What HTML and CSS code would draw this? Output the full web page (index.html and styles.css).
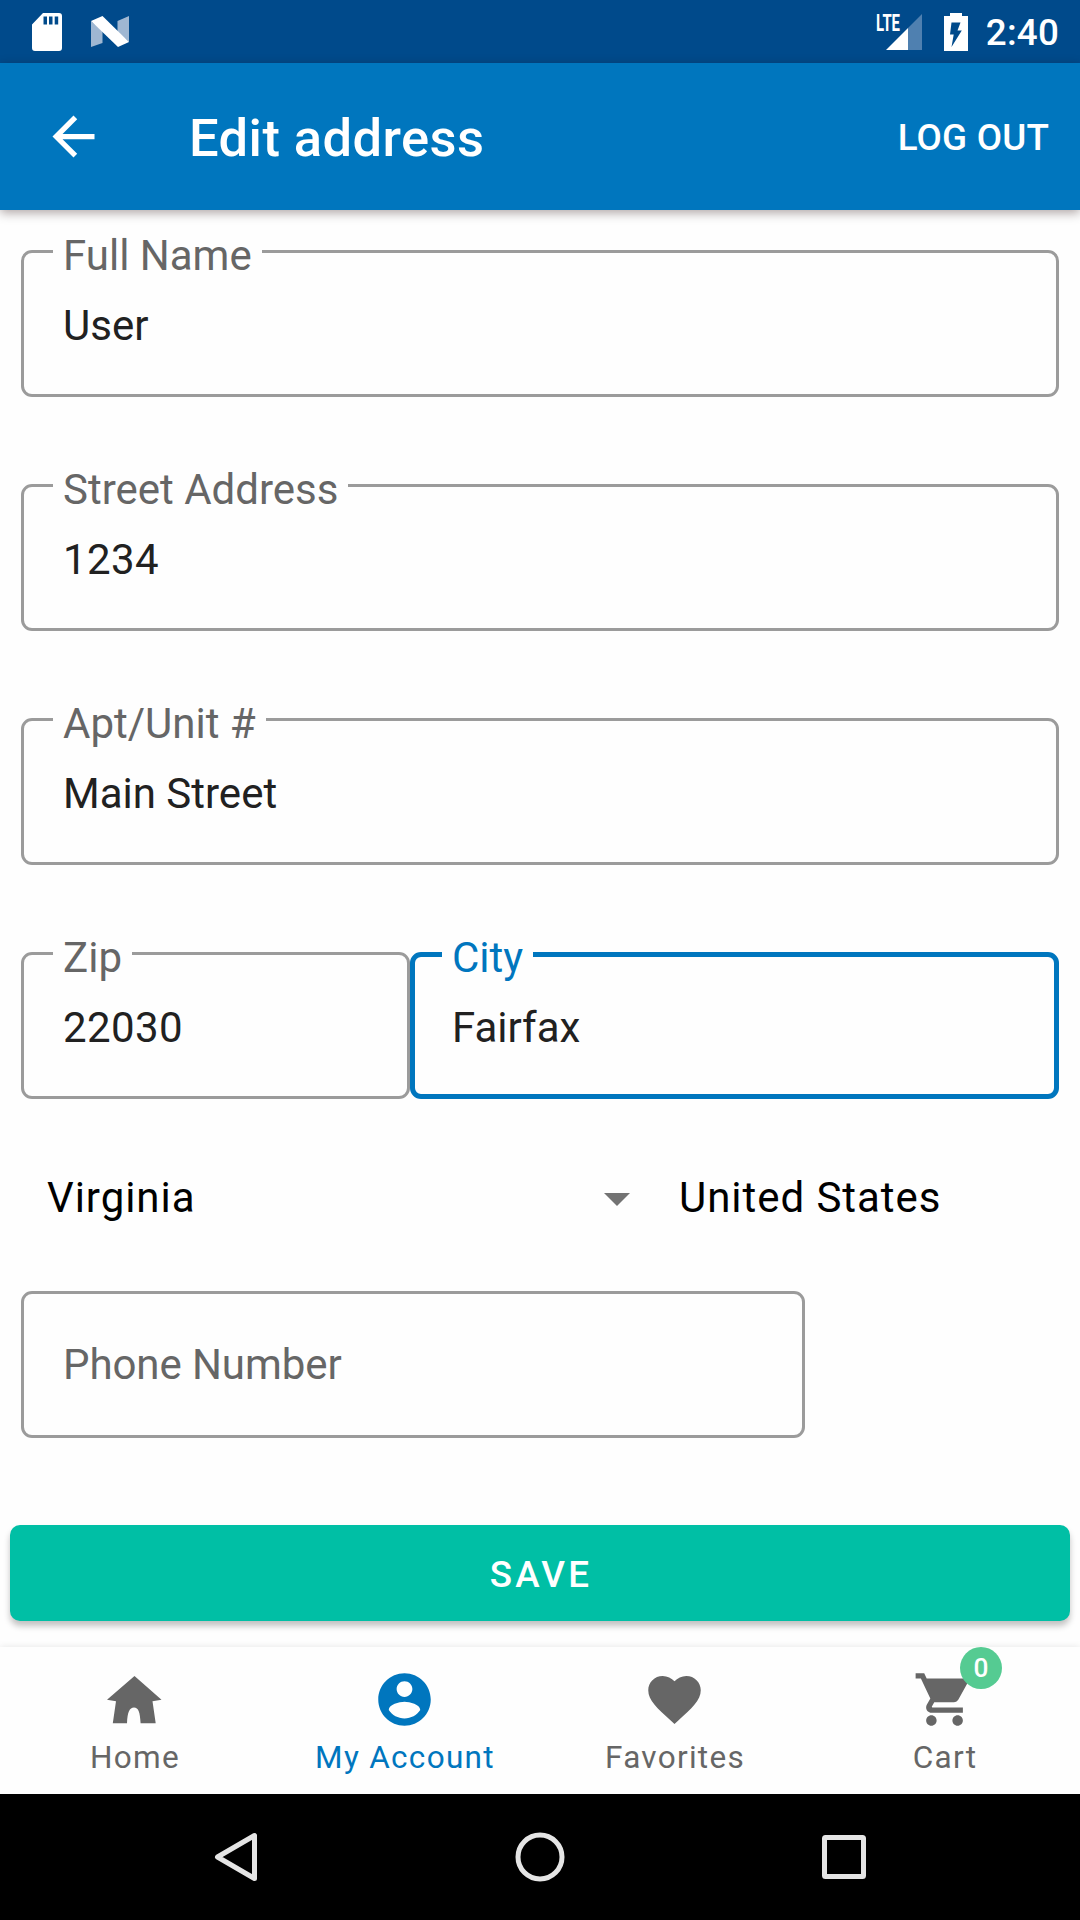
FILE: index.html
```html
<!DOCTYPE html>
<html lang="en">
<head>
<meta charset="utf-8">
<title>Edit address</title>
<link rel="stylesheet" href="styles.css">
</head>
<body>
<div class="screen">
  <div class="status-bar">
    <svg class="sd-icon" viewBox="0 0 30 38"><path fill="#fff" fill-rule="evenodd" d="M11 0H27Q30 0 30 3V35Q30 38 27 38H3Q0 38 0 35V11.500ZM11.500 3.500V11.500H15V3.500ZM17 3.500V11.500H20.500V3.500ZM22.700 3.500V11.500H26.200V3.500Z"/></svg>
    <svg class="n-icon" viewBox="0 0 38 31"><path fill="#9fb7d2" d="M0 5L11.500 15V27L0 31ZM26.500 5L38 0V26L26.500 16Z"/><path fill="#fff" d="M0 5L11.500 0L38 26L27 31Z"/></svg>
    <div class="signal">
      <svg class="signal-icon" viewBox="0 0 36 36"><path fill="#4f80b0" d="M22 14L36 0V36H22Z"/><path fill="#fff" d="M0 36L22 14V36Z"/></svg>
      <span class="signal-type">LTE</span>
    </div>
    <svg class="battery-icon" viewBox="0 0 24 38"><path fill="#fff" d="M6 0H18V3H24V38H0V3H6Z"/><path fill="#004a8b" d="M7.500 9.500H16.500L13.500 17.500H17.800L7.500 34L9.700 21.500H6Z"/></svg>
    <span class="clock">2:40</span>
  </div>

  <header class="app-bar">
    <svg class="back-icon" viewBox="0 0 24 24"><path fill="#fff" d="M20 11H7.830l5.590-5.590L12 4l-8 8 8 8 1.410-1.410L7.830 13H20v-2z"/></svg>
    <h1 class="title">Edit address</h1>
    <span class="logout">LOG OUT</span>
  </header>

  <main class="form">
    <div class="field"><span class="label">Full Name</span><span class="value">User</span></div>
    <div class="field"><span class="label">Street Address</span><span class="value numeric">1234</span></div>
    <div class="field"><span class="label">Apt/Unit #</span><span class="value">Main Street</span></div>
    <div class="row">
      <div class="field zip"><span class="label">Zip</span><span class="value numeric">22030</span></div>
      <div class="field city focused"><span class="label">City</span><span class="value">Fairfax</span></div>
    </div>
    <div class="region">
      <span class="state">Virginia</span>
      <svg class="caret" viewBox="0 0 26 13"><path fill="#737373" d="M0 0H26L13 13Z"/></svg>
      <span class="country">United States</span>
    </div>
    <div class="field phone"><span class="placeholder">Phone Number</span></div>
    <div class="save">SAVE</div>
  </main>

  <nav class="tabs">
    <div class="tab">
      <svg class="tab-icon" viewBox="0 0 63 63"><path d="M31.500 8L58.500 31.700L49.500 33.200L52.700 55.300H37.600C37 44 35.500 39.500 31 39.500C26.500 39.500 24.500 44 24 55.300H9.800L13 33.200L4 31.700Z"/></svg>
      <span class="tab-label">Home</span>
    </div>
    <div class="tab active">
      <svg class="tab-icon" viewBox="0 0 24 24"><path d="M12 2C6.480 2 2 6.480 2 12s4.480 10 10 10 10-4.480 10-10S17.520 2 12 2zm0 3c1.660 0 3 1.340 3 3s-1.340 3-3 3-3-1.340-3-3 1.340-3 3-3zm0 14.200c-2.500 0-4.710-1.280-6-3.220.030-1.990 4-3.080 6-3.080 1.990 0 5.970 1.090 6 3.080-1.290 1.940-3.500 3.220-6 3.220z"/></svg>
      <span class="tab-label">My Account</span>
    </div>
    <div class="tab">
      <svg class="tab-icon" viewBox="0 0 24 24"><path d="M12 21.350l-1.450-1.320C5.400 15.360 2 12.280 2 8.500 2 5.420 4.420 3 7.500 3c1.740 0 3.410.810 4.500 2.090C13.090 3.810 14.760 3 16.500 3 19.580 3 22 5.420 22 8.500c0 3.780-3.400 6.860-8.550 11.540L12 21.350z"/></svg>
      <span class="tab-label">Favorites</span>
    </div>
    <div class="tab">
      <svg class="tab-icon" viewBox="0 0 24 24"><path d="M7 18c-1.100 0-1.990.900-1.990 2S5.900 22 7 22s2-.900 2-2-.900-2-2-2zM1 2v2h2l3.600 7.590-1.350 2.450c-.160.280-.250.610-.250.960 0 1.100.900 2 2 2h12v-2H7.420c-.140 0-.250-.110-.250-.250l.030-.120.900-1.630h7.450c.750 0 1.410-.410 1.750-1.030l3.580-6.490c.080-.140.120-.310.120-.480 0-.550-.450-1-1-1H5.210l-.940-2H1zm16 16c-1.100 0-1.990.900-1.990 2s.890 2 1.990 2 2-.900 2-2-.900-2-2-2z"/></svg>
      <span class="badge">0</span>
      <span class="tab-label">Cart</span>
    </div>
  </nav>

  <div class="system-nav">
    <svg viewBox="0 0 50 50"><path d="M43.500 3.500V46.500L6.500 25Z"/></svg>
    <svg viewBox="0 0 50 50"><circle cx="25" cy="25" r="22"/></svg>
    <svg viewBox="0 0 50 50"><rect x="5.500" y="5.500" width="39" height="39" rx="1"/></svg>
  </div>
</div>
</body>
</html>
```
FILE: styles.css
```css
* {
  box-sizing: border-box;
}

body {
  margin: 0;
  font-family: Roboto, "Liberation Sans", sans-serif;
}

svg {
  display: block;
  flex: none;
}

.screen {
  display: flex;
  flex-direction: column;
  width: 1080px;
  height: 1920px;
  overflow: hidden;
  background: #fefefe;
}

.status-bar {
  display: flex;
  align-items: center;
  height: 63px;
  padding: 0 21px 0 32px;
  background: #004a8b;
  color: #fff;
}

.sd-icon {
  width: 30px;
  height: 38px;
}

.n-icon {
  width: 38px;
  height: 31px;
  margin-left: 29px;
}

.signal {
  position: relative;
  margin-left: auto;
}

.signal-icon {
  width: 36px;
  height: 36px;
}

.signal-type {
  position: absolute;
  left: -10px;
  top: -1px;
  font-size: 24px;
  font-weight: 700;
  line-height: 20px;
  transform: scaleX(0.620);
  transform-origin: left;
}

.battery-icon {
  width: 24px;
  height: 38px;
  margin: 0 18px 0 22px;
}

.clock {
  font-size: 36.750px;
  font-weight: 500;
  line-height: 44px;
  letter-spacing: 0.200px;
  padding-top: 3px;
}

.app-bar {
  position: relative;
  display: flex;
  align-items: center;
  height: 147px;
  padding: 0 31px 0 42px;
  background: #0076be;
  color: #fff;
  box-shadow: 0 3px 10px rgba(30, 0, 0, 0.350);
}

.back-icon {
  width: 63px;
  height: 63px;
}

.title {
  margin: 3px 0 0 84px;
  font-size: 52.500px;
  font-weight: 500;
  line-height: 62px;
  letter-spacing: 0.420px;
}

.logout {
  margin: 2px 0 0 auto;
  font-size: 36.750px;
  font-weight: 500;
  line-height: 44px;
  letter-spacing: 0.200px;
}

.form {
  flex: 1;
  display: flex;
  flex-direction: column;
  padding: 40px 21px 0;
  font-size: 42px;
  line-height: 49px;
}

.field {
  position: relative;
  height: 147px;
  margin-bottom: 87px;
  padding: 48px 39px 0;
  border: 3px solid #9b9b9b;
  border-radius: 11px;
  color: #212121;
}

.label {
  position: absolute;
  top: -22px;
  left: 29px;
  padding: 0 10px;
  background: #fefefe;
  color: #666;
  white-space: nowrap;
}

.value {
  display: block;
}

.numeric {
  letter-spacing: 0.400px;
}

.row {
  display: flex;
}

.row .field {
  margin-bottom: 0;
}

.zip {
  width: 389px;
}

.city {
  flex: 1;
}

.focused {
  padding: 46px 37px 0;
  border: 5px solid #0076be;
}

.focused .label {
  top: -24px;
  left: 27px;
  color: #0076be;
}

.region {
  display: flex;
  align-items: flex-start;
  height: 192px;
  padding: 74px 0 0 26px;
  color: #000;
  letter-spacing: 0.950px;
}

.state {
  width: 556.500px;
}

.caret {
  width: 26px;
  height: 13px;
  margin-top: 20px;
}

.country {
  margin-left: 49.500px;
}

.phone {
  display: flex;
  align-items: center;
  width: 784px;
  padding: 0 39px;
}

.placeholder {
  color: #666;
  letter-spacing: -0.080px;
}

.save {
  display: flex;
  align-items: center;
  justify-content: center;
  height: 96px;
  margin: 0 -11px;
  padding: 2px 0 0 2px;
  border-radius: 10px;
  background: #00bfa5;
  color: #fff;
  font-size: 36.750px;
  font-weight: 500;
  letter-spacing: 3.280px;
  box-shadow: 0 5px 6px rgba(0, 0, 0, 0.240);
}

.tabs {
  display: flex;
  height: 147px;
  background: #fefefe;
  box-shadow: 0 0 7px rgba(0, 0, 0, 0.100);
}

.tab {
  position: relative;
  display: flex;
  flex-direction: column;
  align-items: center;
  width: 270px;
  padding-top: 21px;
  color: #666;
}

.active {
  color: #0076be;
}

.tab-icon {
  width: 63px;
  height: 63px;
  margin-right: 1px;
  fill: currentColor;
}

.tab-label {
  margin-top: 8px;
  font-size: 31.500px;
  line-height: 37px;
  letter-spacing: 1.300px;
}

.badge {
  position: absolute;
  top: 0;
  left: 150px;
  width: 42px;
  height: 42px;
  border-radius: 50%;
  background: #55cb92;
  color: #fff;
  font-size: 26.250px;
  font-weight: 500;
  line-height: 43px;
  text-align: center;
}

.system-nav {
  position: relative;
  display: flex;
  justify-content: center;
  align-items: center;
  gap: 254px;
  height: 126px;
  background: #000;
}

.system-nav svg {
  width: 50px;
  height: 50px;
  fill: none;
  stroke: #e5e5e5;
  stroke-width: 5;
  stroke-linejoin: round;
}
```
